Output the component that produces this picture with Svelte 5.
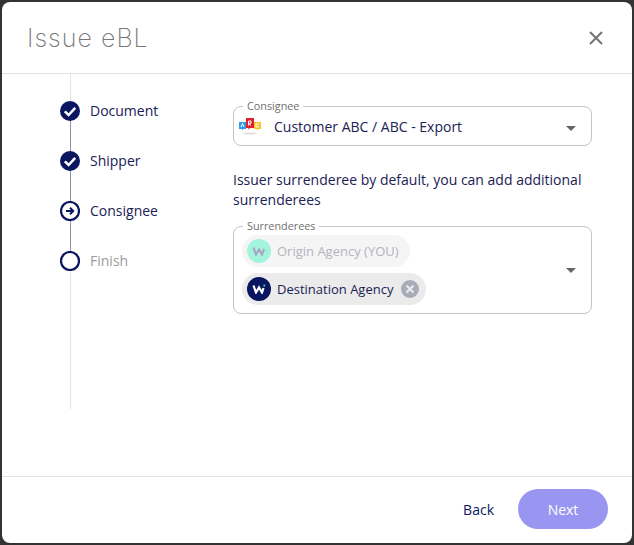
<script>
	const steps = [
		{ label: 'Document', state: 'done' },
		{ label: 'Shipper', state: 'done' },
		{ label: 'Consignee', state: 'active' },
		{ label: 'Finish', state: 'todo' }
	];
</script>

<div class="backdrop">
	<div class="dialog">
		<header class="head">
			<h1>Issue eBL</h1>
			<button class="close" aria-label="Close">
				<svg width="16" height="16" viewBox="0 0 16 16"><path d="M2 2 L14 14 M14 2 L2 14" stroke="#757575" stroke-width="2" fill="none" /></svg>
			</button>
		</header>

		<div class="body">
			<div class="stepper">
				<ol>
					{#each steps as step, i}
						<li class="step {step.state}">
							<span class="dot">
								{#if step.state === 'done'}
									<svg width="20" height="20" viewBox="0 0 20 20"><circle cx="10" cy="10" r="10" fill="#0a1760" /><path d="M4.8 10.4 L8.6 14 L15.2 6.9" stroke="#fff" stroke-width="2.5" fill="none" /></svg>
								{:else if step.state === 'active'}
									<svg width="20" height="20" viewBox="0 0 20 20"><circle cx="10" cy="10" r="9" fill="#fff" stroke="#0a1760" stroke-width="2.2" /><path d="M6 10 H13 M10 6.8 L13.2 10 L10 13.2" stroke="#0a1760" stroke-width="2" fill="none" /></svg>
								{:else}
									<svg width="20" height="20" viewBox="0 0 20 20"><circle cx="10" cy="10" r="9" fill="#fff" stroke="#0a1760" stroke-width="2.2" /></svg>
								{/if}
							</span>
							<span class="label">{step.label}</span>
							{#if i < steps.length - 1}
								<span class="link"></span>
							{/if}
						</li>
					{/each}
				</ol>
			</div>

			<div class="form">
				<fieldset class="field single">
					<legend>Consignee</legend>
					<svg class="logo" width="22" height="18" viewBox="0 0 22 18">
						<ellipse cx="11" cy="16.5" rx="7" ry="1" fill="#ddd" />
						<path d="M0 5 H7 V12 H4 L3 14 V12 H0 Z" fill="#2f9be8" />
						<path d="M7 1 H15 V11 H11 L9.5 13 V11 H7 Z" fill="#e2202c" />
						<path d="M15 5 H22 V12 H19 L18 14 V12 H15 Z" fill="#f7c325" />
						<path d="M2 10 L3.5 6.5 L5 10" stroke="#fff" stroke-width="1" fill="none" />
						<path d="M9.5 8.5 V4 H12 V6.3 H9.5 L12 8.5" stroke="#fff" stroke-width="1" fill="none" />
						<path d="M20 7 H17 V10 H20" stroke="#fff" stroke-width="1" fill="none" />
					</svg>
					<span class="value">Customer ABC / ABC - Export</span>
					<span class="caret"></span>
				</fieldset>

				<p class="hint">Issuer surrenderee by default, you can add additional surrenderees</p>

				<fieldset class="field multi">
					<legend>Surrenderees</legend>
					<div class="chips">
						<div class="chip disabled">
							<span class="avatar mint">
								<svg width="14" height="10" viewBox="0 0 14 10"><path d="M1.5 1.5 L4 8.5 L7 3.5 L10 8.5 L12 3" stroke="#a9a6c2" stroke-width="2.2" fill="none" /></svg>
							</span>
							<span>Origin Agency (YOU)</span>
						</div>
						<div class="chip">
							<span class="avatar navy">
								<svg width="14" height="10" viewBox="0 0 14 10"><path d="M1.5 1.5 L4 8.5 L7 3.5 L10 8.5 L11.5 4" stroke="#fff" stroke-width="2.2" fill="none" /><circle cx="12.3" cy="1.6" r="1" fill="#4fe0b0" /></svg>
							</span>
							<span>Destination Agency</span>
							<svg class="remove" width="18" height="18" viewBox="0 0 18 18"><circle cx="9" cy="9" r="9" fill="#a9abb8" /><path d="M5.5 5.5 L12.5 12.5 M12.5 5.5 L5.5 12.5" stroke="#ebebeb" stroke-width="2" /></svg>
						</div>
					</div>
					<span class="caret"></span>
				</fieldset>
			</div>
		</div>

		<footer class="foot">
			<button class="back">Back</button>
			<button class="next">Next</button>
		</footer>
	</div>
</div>

<style>
	:global(body) {
		margin: 0;
		background: #333;
	}

	.backdrop {
		width: 634px;
		height: 545px;
		padding: 2px;
		box-sizing: border-box;
		background: #333;
		font-family: "Open Sans", sans-serif;
		color: #0a1760;
	}

	.dialog {
		width: 630px;
		height: 541px;
		background: #fff;
		border-radius: 8px;
		display: flex;
		flex-direction: column;
		overflow: hidden;
	}

	.head {
		height: 72px;
		flex: none;
		box-sizing: border-box;
		border-bottom: 1px solid #e3e3e3;
		display: flex;
		align-items: center;
		justify-content: space-between;
		padding: 0 28px 0 25px;
	}

	h1 {
		margin: 0;
		font-family: Inter, sans-serif;
		font-weight: 200;
		font-size: 25px;
		letter-spacing: 1.05px;
		color: #777;
	}

	.close {
		border: 0;
		padding: 0;
		background: none;
		width: 16px;
		height: 16px;
		display: block;
	}

	.body {
		flex: 1;
		display: flex;
		min-height: 0;
	}

	.stepper {
		width: 58px;
		margin-left: 10px;
		flex: none;
	}

	ol {
		list-style: none;
		margin: 0 0 0 48px;
		padding: 27px 0 0;
		height: 335px;
		box-sizing: border-box;
		width: 130px;
		background: linear-gradient(#e3e3e3, #e3e3e3) 9.5px 0 / 1px 100% no-repeat;
	}

	.step {
		height: 50px;
		display: flex;
		align-items: flex-start;
		gap: 10px;
		position: relative;
	}

	.dot {
		width: 20px;
		height: 20px;
		display: block;
		flex: none;
		position: relative;
		z-index: 1;
	}

	.dot svg {
		display: block;
	}

	.label {
		font-size: 14px;
		line-height: 20px;
		color: #1a2155;
	}

	.todo .label {
		color: #9b9b9b;
	}

	.link {
		position: absolute;
		left: 9.5px;
		top: 20px;
		width: 1px;
		height: 30px;
		background: #8e92a8;
	}

	.form {
		margin-left: 163px;
		width: 359px;
		padding-top: 25px;
		box-sizing: border-box;
	}

	.field {
		margin: 0;
		padding: 0;
		border: 1px solid #c4c4c4;
		border-radius: 8px;
		position: relative;
		box-sizing: border-box;
		min-width: 0;
	}

	legend {
		padding: 0 4px;
		font-size: 10.8px;
		line-height: 14px;
		color: #6f6f6f;
	}

	.single {
		height: 47px;
		display: flex;
		align-items: center;
		padding-left: 5px;
	}

	.single legend {
		margin-left: 4px;
	}

	.logo {
		flex: none;
		margin-top: -6px;
	}

	.value {
		font-size: 14px;
		margin-left: 13px;
		margin-top: -6px;
		color: #1a2155;
	}

	.caret {
		position: absolute;
		right: 15px;
		top: 50%;
		width: 0;
		height: 0;
		margin-top: -3px;
		border-left: 5px solid transparent;
		border-right: 5px solid transparent;
		border-top: 5px solid #666;
	}

	.multi .caret {
		margin-top: -5px;
	}

	.hint {
		margin: 24px 0 9px;
		font-size: 14px;
		line-height: 20px;
		color: #1a2155;
	}

	.multi {
		height: 95px;
		padding: 2px 8px 0;
	}

	.multi legend {
		margin-left: 1px;
	}

	.chips {
		display: flex;
		flex-direction: column;
		align-items: flex-start;
		gap: 6px;
	}

	.chip {
		height: 32px;
		border-radius: 16px;
		background: #ebebeb;
		display: flex;
		align-items: center;
		padding: 0 7px 0 5px;
		gap: 6px;
		font-size: 13px;
		color: #1a2155;
	}

	.chip.disabled {
		background: #f5f5f5;
		color: #b3b3bf;
		padding-right: 11px;
	}

	.avatar {
		width: 24px;
		height: 24px;
		border-radius: 50%;
		display: flex;
		align-items: center;
		justify-content: center;
		flex: none;
	}

	.mint {
		background: #a2f5dc;
	}

	.navy {
		background: #0a1760;
	}

	.remove {
		margin-left: 2px;
		display: block;
	}

	.foot {
		height: 67px;
		flex: none;
		box-sizing: border-box;
		border-top: 1px solid #e3e3e3;
		display: flex;
		align-items: flex-start;
		justify-content: flex-end;
		padding: 12px 24px 0 0;
		gap: 24px;
	}

	.foot button {
		border: 0;
		font-family: inherit;
		font-size: 14px;
	}

	.back {
		background: none;
		padding: 0;
		height: 40px;
		color: #0a1760;
	}

	.next {
		width: 90px;
		height: 40px;
		border-radius: 20px;
		background: #9896f0;
		color: #fff;
	}
</style>
